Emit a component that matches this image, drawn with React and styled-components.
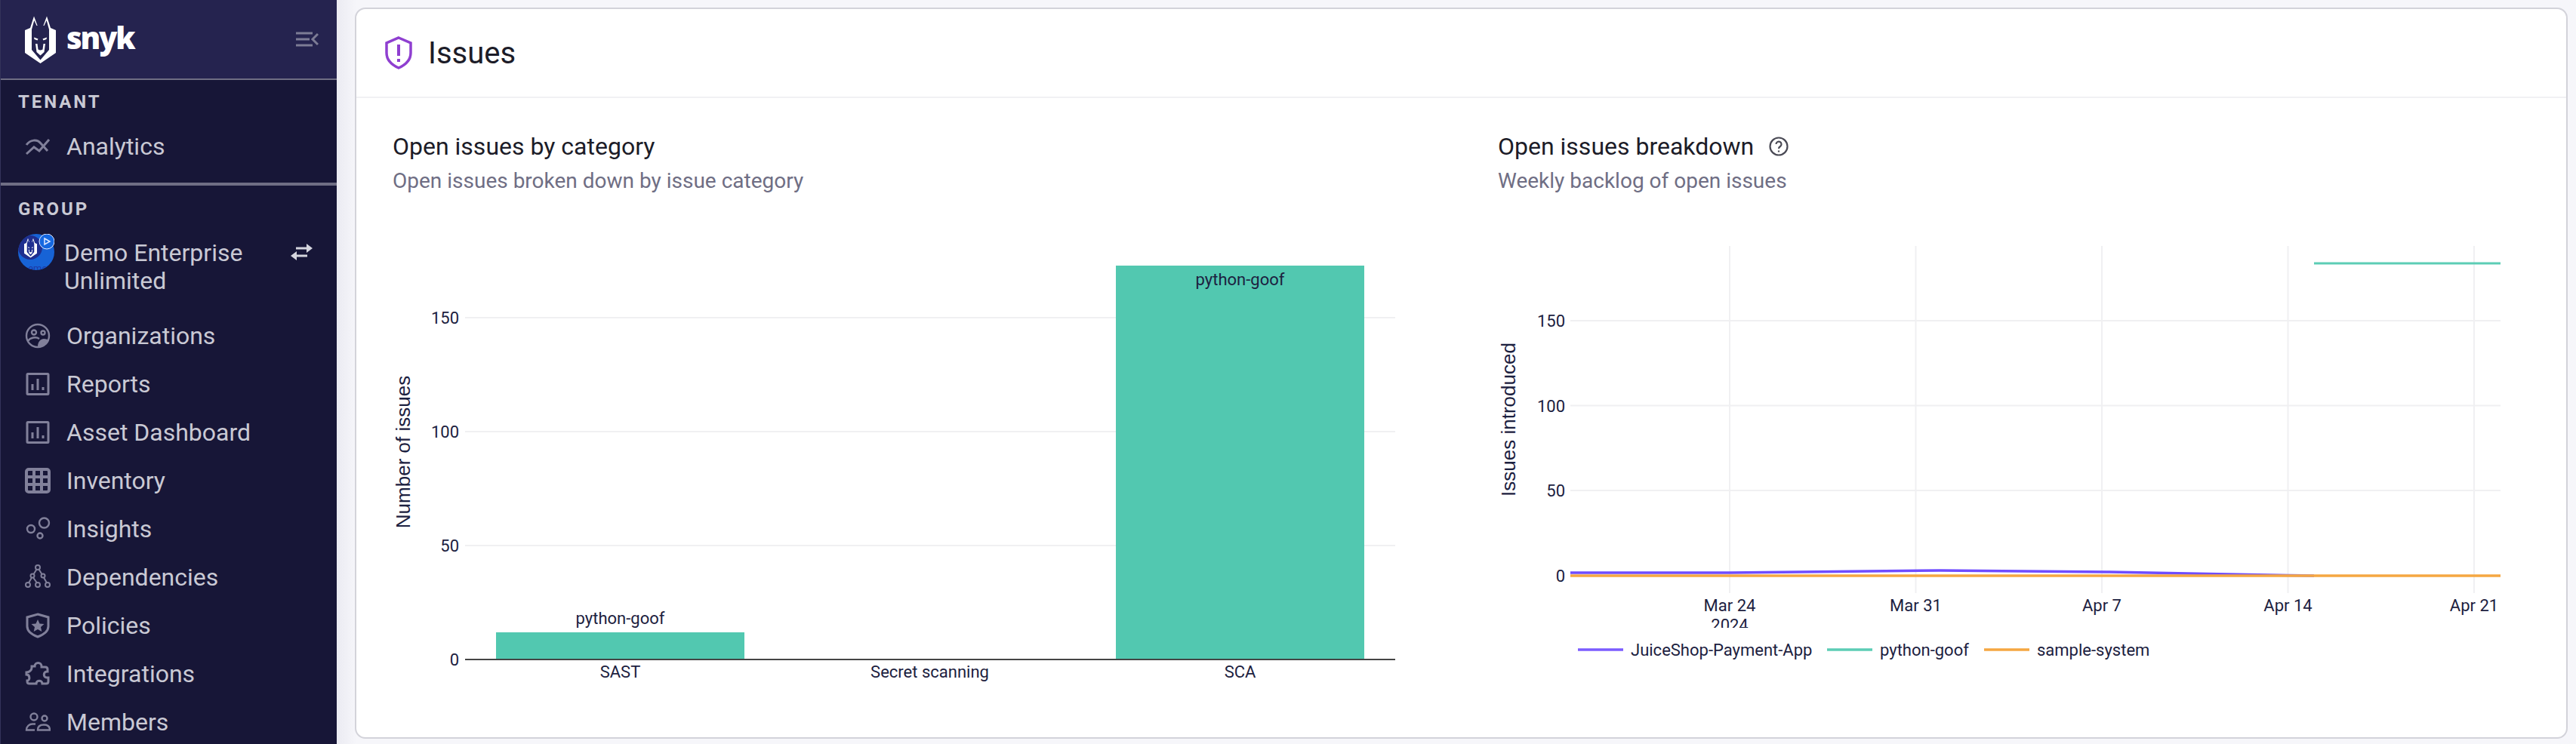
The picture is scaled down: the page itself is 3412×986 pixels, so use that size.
import React from "react";
import styled, { createGlobalStyle } from "styled-components";

const GlobalStyle = createGlobalStyle`
  html, body {
    margin: 0;
    padding: 0;
    height: 100%;
    overflow: hidden;
    background: #f5f5f9;
    font-family: Roboto, "Liberation Sans", sans-serif;
  }
  * { box-sizing: border-box; }
`;

const Page = styled.div`
  display: flex;
  width: 3412px;
  height: 986px;
  overflow: hidden;
`;

const Sidebar = styled.aside`
  flex: 0 0 446px;
  height: 986px;
  overflow: hidden;
  background: #171637;
  border-left: 1px solid #34335a;
  color: #c9c9d4;
`;

const Brand = styled.div`
  display: flex;
  align-items: center;
  justify-content: space-between;
  height: 106px;
  padding: 0 24px 0 32px;
  background: #25234f;
  border-bottom: 2px solid #6f6e84;
`;

const BrandMark = styled.div`
  display: flex;
  align-items: center;
  gap: 14px;
`;

const Wordmark = styled.span`
  font-family: "Open Sans", sans-serif;
  font-size: 40px;
  font-weight: 800;
  line-height: 60px;
  letter-spacing: -2.2px;
  color: #fff;
  position: relative;
  top: -2px;
`;

const Section = styled.section`
  padding: ${(p) => p.$top || 15}px 0 ${(p) => p.$bottom || 0}px;
  border-bottom: ${(p) => (p.$divider ? "4px solid #6f6e84" : "none")};
`;

const SectionLabel = styled.div`
  padding-left: 23px;
  font-size: 24px;
  font-weight: 700;
  line-height: 28px;
  letter-spacing: 2.9px;
  color: #c9c9d4;
`;

const NavList = styled.nav`
  display: flex;
  flex-direction: column;
  margin-top: ${(p) => p.$top}px;
`;

const NavRow = styled.a`
  display: flex;
  align-items: center;
  gap: 21px;
  height: 64px;
  padding-left: 32px;
  font-size: 32px;
  color: #c9c9d4;

  svg {
    flex: 0 0 34px;
    color: #81809a;
  }
`;

const Switcher = styled.div`
  display: flex;
  align-items: flex-start;
  margin-top: 19px;
  padding: 0 32px 0 23px;
`;

const SwitcherName = styled.div`
  flex: 1;
  padding: 7px 0 0 13px;
  font-size: 32px;
  line-height: 37px;
`;

const SwapIcon = styled.svg`
  margin-top: 12px;
  color: #d5d5de;
`;

const Main = styled.main`
  flex: 1;
  min-width: 0;
  padding: 10px 11px 7px 24px;
  background: linear-gradient(to right, #ebebf2, #f6f6fa 26px);
`;

const Card = styled.div`
  height: 100%;
  background: #fff;
  border: 2px solid #d3d3da;
  border-radius: 14px;
  overflow: hidden;
`;

const CardHeader = styled.header`
  display: flex;
  align-items: center;
  gap: 21px;
  height: 118px;
  padding: 0 0 0 38px;
  border-bottom: 2px solid #f1f1f4;
`;

const CardTitle = styled.h1`
  margin: 0;
  font-size: 40px;
  font-weight: 400;
  color: #1c1c28;
`;

const Panels = styled.div`
  display: grid;
  grid-template-columns: 1464px 1fr;
  padding: 42px 0 0 48px;
`;

const Panel = styled.div`
  min-width: 0;
`;

const PanelTitle = styled.h2`
  display: flex;
  align-items: center;
  gap: 20px;
  height: 44px;
  margin: 0;
  font-size: 32px;
  font-weight: 400;
  color: #1c1c28;
`;

const PanelSub = styled.p`
  height: 40px;
  margin: 4px 0 40px;
  font-size: 28px;
  line-height: 40px;
  color: #6f6e84;
`;

const ChartSvg = styled.svg`
  display: block;

  text {
    font-family: Roboto, "Liberation Sans", sans-serif;
    fill: #1c2140;
    font-size: 22px;
  }

  .axis-title {
    font-family: "Liberation Sans", sans-serif;
    font-size: 26px;
  }

  .grid {
    stroke: #f0f0f2;
    stroke-width: 2;
    fill: none;
  }
`;

function DogMark({ x, y, width, height, face = "#25234f" }) {
  return (
    <svg x={x} y={y} width={width} height={height} viewBox="33 21 41 63">
      <path fill="#fff" d="M45 21.500L50 35H57L62 21.500L67 37L74 40V70L53.500 84L33 70V40L40 37Z" />
      <path fill={face} d="M45.300 27L48.500 34H58.500L61.700 27L65 39V66L53.500 79.500L42 66V39Z" />
      <path fill="#fff" d="M45 49.500l5.500 2-1 2-4-1.500zM62 49.500l-5.500 2 1 2 4-1.500z" />
      <path fill="#fff" d="M47 58h2.500l1 7.500q3 2 6 0l1-7.500H60l-1.500 11-5 4.500-5-4.500z" />
    </svg>
  );
}

const iconProps = {
  width: 34,
  height: 34,
  viewBox: "0 0 34 34",
  fill: "none",
  stroke: "currentColor",
  strokeWidth: 2.4,
};

const icons = {
  analytics: (
    <svg {...iconProps} strokeWidth="3">
      <path d="M2 15C7 8 16 7 21 13L30 23" />
      <path d="M2 27L12 18L19 23L32 8" />
    </svg>
  ),
  organizations: (
    <svg {...iconProps}>
      <circle cx="17" cy="17" r="15" />
      <circle cx="12" cy="12.500" r="3" />
      <circle cx="24" cy="13" r="2.500" />
      <path d="M4 24c3-5 11-6 15-3" />
      <path fill="currentColor" stroke="none" d="M17 31c0-6 4-10 8-10 3 0 6 1 7 2-2 6-8 9-15 8z" />
    </svg>
  ),
  reports: (
    <svg {...iconProps} strokeWidth="3">
      <rect x="3" y="3.500" width="28" height="27" rx="1" />
      <path d="M10 25v-8M17 25V10M24 25v-4" />
    </svg>
  ),
  inventory: (
    <svg {...iconProps} strokeWidth="4">
      <rect x="2" y="2" width="30" height="30" rx="3" />
      <path d="M2 12h30M2 22h30M12 2v30M22 2v30" />
    </svg>
  ),
  insights: (
    <svg {...iconProps}>
      <circle cx="25.500" cy="9" r="6.500" />
      <circle cx="8" cy="17" r="5" />
      <circle cx="20" cy="26" r="3.500" />
    </svg>
  ),
  dependencies: (
    <svg {...iconProps} strokeWidth="2">
      <circle cx="17" cy="4" r="3" />
      <circle cx="10" cy="15" r="2.500" />
      <circle cx="24" cy="15" r="2.500" />
      <circle cx="4" cy="27" r="3" />
      <circle cx="17" cy="27" r="3" />
      <circle cx="30" cy="27" r="3" />
      <path d="M15.500 6.500l-4 6.500M18.500 6.500l4 6.500M9 17.500l-4 7M11 17.500l5 7M25 17.500l4 7" />
    </svg>
  ),
  policies: (
    <svg {...iconProps} strokeWidth="3">
      <path d="M17 2l14 4v12c0 7-6 11-14 14C9 29 3 25 3 18V6z" />
      <path
        fill="currentColor"
        stroke="none"
        d="M17 9l2.500 5.500 6 .6-4.500 4 1.300 6L17 22l-5.300 3.100 1.300-6-4.500-4 6-.6z"
      />
    </svg>
  ),
  integrations: (
    <svg {...iconProps} strokeWidth="3">
      <path d="M13 7c0-6 9-6 9 0v1h5c2 0 3 1 3 3v3h-1c-5 0-5 8 0 8h2v5c0 2-1 3-3 3h-5c0-5-8-5-8 0H6c-2 0-3-1-3-3v-1c4 0 4-8-1-8v-3c4 0 7-3 7-6v-2z" />
    </svg>
  ),
  members: (
    <svg {...iconProps}>
      <circle cx="12" cy="10" r="4.500" />
      <circle cx="26" cy="12" r="3.500" />
      <path d="M14 19.500H10c-4 0-8 3-8 8h11" />
      <path d="M17 27.500c0-4.500 3-7 8-7s8 2.500 8 7z" />
    </svg>
  ),
};

const navItems = [
  ["organizations", "Organizations"],
  ["reports", "Reports"],
  ["reports", "Asset Dashboard"],
  ["inventory", "Inventory"],
  ["insights", "Insights"],
  ["dependencies", "Dependencies"],
  ["policies", "Policies"],
  ["integrations", "Integrations"],
  ["members", "Members"],
];

function GroupAvatar() {
  return (
    <svg width="48" height="48" viewBox="0 0 48 48">
      <defs>
        <clipPath id="avatar-clip">
          <circle cx="24" cy="24" r="24" />
        </clipPath>
      </defs>
      <g clipPath="url(#avatar-clip)">
        <rect width="48" height="48" fill="#1763d6" />
        <circle cx="16" cy="18" r="16" fill="#1f2f8f" />
        <text x="26" y="50" fontFamily="Roboto" fontSize="13" fill="#1d3aa8" textAnchor="middle">
          emo
        </text>
      </g>
      <DogMark x={8} y={5} width={17} height={27} face="#1f2f8f" />
      <circle cx="38" cy="10" r="10" fill="#1568e0" stroke="#dfe8ff" strokeWidth="1" />
      <path d="M35 6l7 4-7 4z" fill="none" stroke="#dfe8ff" strokeWidth="1.500" />
    </svg>
  );
}

const X1 = 616;

function CategoryChart() {
  const bars = [
    { label: "SAST", x: 657, top: 838, valueY: 827 },
    { label: "Secret scanning", x: 1067 },
    { label: "SCA", x: 1478, top: 352, valueY: 378 },
  ];
  return (
    <ChartSvg width="1400" height="640" viewBox="520 300 1400 640">
      {[723, 572, 421].map((y) => (
        <line key={y} className="grid" x1={X1} x2="1848" y1={y} y2={y} />
      ))}
      {bars.map((b) =>
        b.top ? <rect key={b.label} x={b.x} y={b.top} width="329" height={874 - b.top} fill="#52c8b0" /> : null
      )}
      <line x1={X1} x2="1848" y1="874" y2="874" stroke="#444" strokeWidth="2" />
      {[
        ["0", 874],
        ["50", 723],
        ["100", 572],
        ["150", 421],
      ].map(([t, y]) => (
        <text key={t} x="608" y={y + 8} textAnchor="end">
          {t}
        </text>
      ))}
      {bars.map((b) => (
        <text key={b.label} x={b.x + 164.5} y="898" textAnchor="middle">
          {b.label}
        </text>
      ))}
      {bars
        .filter((b) => b.top)
        .map((b) => (
          <text key={b.label} x={b.x + 164.5} y={b.valueY} textAnchor="middle">
            python-goof
          </text>
        ))}
      <text className="axis-title" transform="translate(543 599) rotate(-90)" textAnchor="middle">
        Number of issues
      </text>
    </ChartSvg>
  );
}

function BacklogChart() {
  const rows = [
    ["150", 425],
    ["100", 537.5],
    ["50", 650],
    ["0", 763],
  ];
  const weeks = [
    ["Mar 24", 2291],
    ["Mar 31", 2537.5],
    ["Apr 7", 2784],
    ["Apr 14", 3030.5],
    ["Apr 21", 3277],
  ];
  const legend = [
    ["JuiceShop-Payment-App", "#7b5cff", 2090],
    ["python-goof", "#5ccdb5", 2420],
    ["sample-system", "#f5a742", 2628],
  ];
  return (
    <ChartSvg width="1361" height="640" viewBox="1984 300 1361 640">
      <defs>
        <clipPath id="tick-clip">
          <rect x="1984" y="300" width="1361" height="532" />
        </clipPath>
      </defs>
      {weeks.map(([t, x]) => (
        <line key={t} className="grid" x1={x} x2={x} y1="326" y2="786" />
      ))}
      {rows.map(([t, y]) => (
        <line key={t} className="grid" x1="2080" x2="3312" y1={y} y2={y} />
      ))}
      <path d="M3065 349H3312" stroke="#5ccdb5" strokeWidth="3" fill="none" />
      <path
        d="M2080 759H2291L2430 757.500L2570 756L2790 758L3030 762.500L3065 763"
        stroke="#6f4cff"
        strokeWidth="3.500"
        fill="none"
      />
      <path d="M2080 763H3312" stroke="#f5a742" strokeWidth="3.500" fill="none" />
      {rows.map(([t, y]) => (
        <text key={t} x="2073" y={y + 8} textAnchor="end">
          {t}
        </text>
      ))}
      <g clipPath="url(#tick-clip)">
        {weeks.map(([t, x]) => (
          <text key={t} x={x} y="810" textAnchor="middle">
            {t}
          </text>
        ))}
        <text x="2291" y="836" textAnchor="middle">
          2024
        </text>
      </g>
      <text className="axis-title" transform="translate(2007 556) rotate(-90)" textAnchor="middle">
        Issues introduced
      </text>
      {legend.map(([t, color, x]) => (
        <g key={t}>
          <line x1={x} x2={x + 60} y1="861" y2="861" stroke={color} strokeWidth="3.500" />
          <text x={x + 70} y="869">
            {t}
          </text>
        </g>
      ))}
    </ChartSvg>
  );
}

export default function App() {
  return (
    <>
      <GlobalStyle />
      <Page>
        <Sidebar>
          <Brand>
            <BrandMark>
              <DogMark width={41} height={63} />
              <Wordmark>snyk</Wordmark>
            </BrandMark>
            <svg width="30" height="20" viewBox="0 0 30 20" fill="none" stroke="#7d7c95" strokeWidth="3">
              <path d="M0 2h22M0 10h18M0 18h22M29 3l-7 7 7 7" />
            </svg>
          </Brand>
          <Section $divider $bottom={16}>
            <SectionLabel>TENANT</SectionLabel>
            <NavList $top={13}>
              <NavRow>
                {icons.analytics}
                Analytics
              </NavRow>
            </NavList>
          </Section>
          <Section $top={17}>
            <SectionLabel>GROUP</SectionLabel>
            <Switcher>
              <GroupAvatar />
              <SwitcherName>Demo Enterprise Unlimited</SwitcherName>
              <SwapIcon width="30" height="24" viewBox="0 0 30 24" fill="none" stroke="currentColor" strokeWidth="3">
                <path d="M8 7h14M23 17H9" />
                <path d="M22 1l8 6-8 6zM9 11l-8 6 8 6z" fill="currentColor" stroke="none" />
              </SwapIcon>
            </Switcher>
            <NavList $top={22}>
              {navItems.map(([icon, label]) => (
                <NavRow key={label}>
                  {icons[icon]}
                  {label}
                </NavRow>
              ))}
            </NavList>
          </Section>
        </Sidebar>
        <Main>
          <Card>
            <CardHeader>
              <svg width="36" height="44" viewBox="0 0 36 44" fill="none" stroke="#8f3fd0" strokeWidth="3.500">
                <path d="M18 2l16 7v13c0 10-7 16-16 20C9 38 2 32 2 22V9z" />
                <path d="M18 11v15M18 30v4" strokeWidth="4" />
              </svg>
              <CardTitle>Issues</CardTitle>
            </CardHeader>
            <Panels>
              <Panel>
                <PanelTitle>Open issues by category</PanelTitle>
                <PanelSub>Open issues broken down by issue category</PanelSub>
                <CategoryChart />
              </Panel>
              <Panel>
                <PanelTitle>
                  Open issues breakdown
                  <svg width="26" height="26" viewBox="0 0 26 26" fill="none" stroke="#4a4a55" strokeWidth="2.200">
                    <circle cx="13" cy="13" r="11.500" />
                    <path d="M9.500 10a3.500 3.500 0 1 1 5.500 3c-1.500 1-2 1.500-2 3" />
                    <path d="M13 18.500v2" />
                  </svg>
                </PanelTitle>
                <PanelSub>Weekly backlog of open issues</PanelSub>
                <BacklogChart />
              </Panel>
            </Panels>
          </Card>
        </Main>
      </Page>
    </>
  );
}
